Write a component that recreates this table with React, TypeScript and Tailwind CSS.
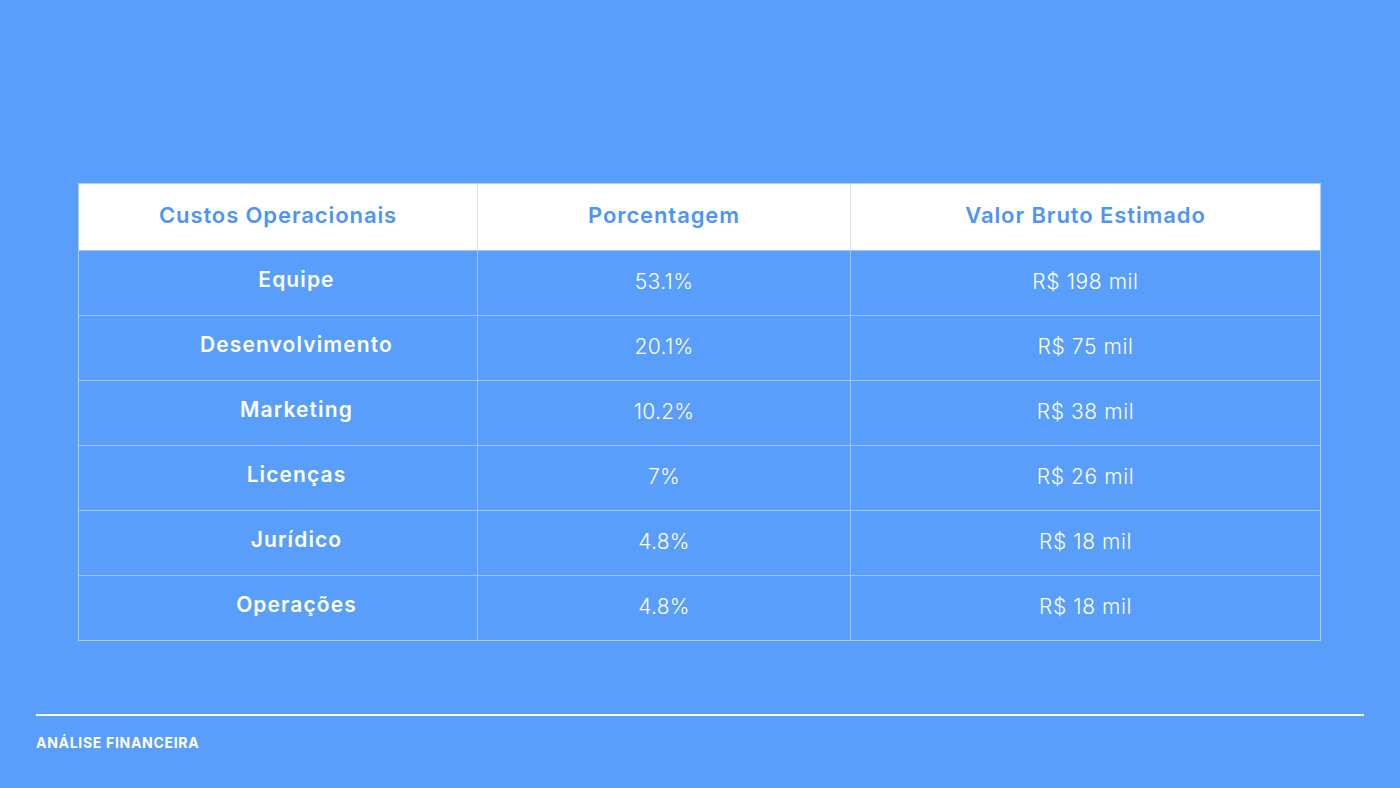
import React from "react";

const rows = [
  { name: "Equipe", pct: "53.1%", value: "R$ 198 mil" },
  { name: "Desenvolvimento", pct: "20.1%", value: "R$ 75 mil" },
  { name: "Marketing", pct: "10.2%", value: "R$ 38 mil" },
  { name: "Licenças", pct: "7%", value: "R$ 26 mil" },
  { name: "Jurídico", pct: "4.8%", value: "R$ 18 mil" },
  { name: "Operações", pct: "4.8%", value: "R$ 18 mil" },
];

const App = () => {
  return (
    <div
      className="w-[1400px] h-[788px] bg-[#599efb] flex flex-col overflow-hidden"
      style={{ fontFamily: 'Inter, "DejaVu Sans", sans-serif' }}
    >
      <div className="pt-[183px] pl-[78px] pr-[79px]">
        <div className="grid grid-cols-[399px_373px_1fr] border border-white/50">
          <div className="h-[66px] bg-white flex items-center justify-center text-[#4c95f7] text-[22px] font-semibold tracking-[0.9px] border-r border-[#e3e3e3] pb-[3px]">
            Custos Operacionais
          </div>
          <div className="h-[66px] bg-white flex items-center justify-center text-[#4c95f7] text-[22px] font-semibold tracking-[0.9px] border-r border-[#e3e3e3] pb-[3px]">
            Porcentagem
          </div>
          <div className="h-[66px] bg-white flex items-center justify-center text-[#4c95f7] text-[22px] font-semibold tracking-[0.9px] pb-[3px]">
            Valor Bruto Estimado
          </div>
          {rows.map((r) => (
            <React.Fragment key={r.name}>
              <div className="h-[65px] flex items-center justify-center text-white text-[21px] font-semibold tracking-[1.1px] border-t border-r border-white/40 pl-[37px] pb-[6px]">
                {r.name}
              </div>
              <div className="h-[65px] flex items-center justify-center text-white text-[21px] font-light tracking-[0.3px] border-t border-r border-white/40 pb-[3px]">
                {r.pct}
              </div>
              <div className="h-[65px] flex items-center justify-center text-white text-[21px] font-light tracking-[0.6px] border-t border-white/40 pb-[3px]">
                {r.value}
              </div>
            </React.Fragment>
          ))}
        </div>
      </div>
      <div className="mt-auto px-[36px] pb-[35px]">
        <div className="h-[2px] bg-white" />
        <div className="mt-[17px] text-white text-[14px] leading-[20px] font-bold tracking-[0.7px]">ANÁLISE FINANCEIRA</div>
      </div>
    </div>
  );
};

export default App;
